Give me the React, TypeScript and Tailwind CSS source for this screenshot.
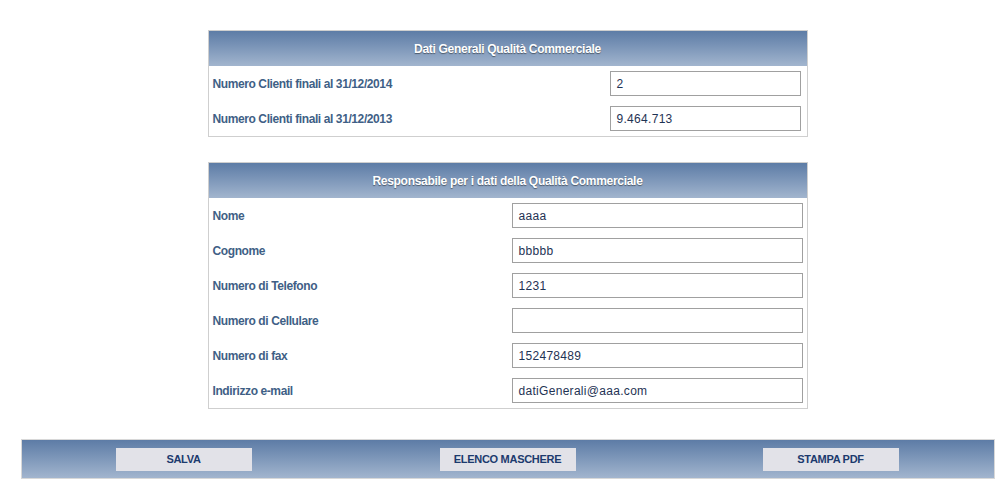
import React from "react";

const hdr = "bg-gradient-to-b from-[#5d7ca6] to-[#a2b5ce]";

function Row({ label, value, inputCls }: { label: string; value: string; inputCls: string }) {
  return (
    <div className="flex h-[35px] items-center justify-between pl-[4px]">
      <span className="text-[12px] font-bold text-[#3f5f86] tracking-[-0.4px]">{label}</span>
      <div className={`${inputCls} h-[25px] border border-[#a0a0a0] bg-white flex items-center pl-[6px] text-[12px] text-[#1f3354] tracking-[0.3px]`}>
        {value}
      </div>
    </div>
  );
}

export default function App() {
  return (
    <div className="w-[1003px] h-[480px] bg-white font-['Liberation_Sans',Arial,sans-serif] flex flex-col items-center pt-[30px]">
      <div className="w-[600px] ml-[12px] border border-[#cfcfcf]">
        <div className={`${hdr} h-[35px] flex items-center justify-center text-white font-bold text-[12px] tracking-[-0.3px] [text-shadow:0_1px_1px_rgba(0,0,0,0.45)]`}>
          Dati Generali Qualità Commerciale
        </div>
        <div className="pr-[6px]">
          <Row label="Numero Clienti finali al 31/12/2014" value="2" inputCls="w-[191px]" />
          <Row label="Numero Clienti finali al 31/12/2013" value="9.464.713" inputCls="w-[191px]" />
        </div>
      </div>

      <div className="w-[600px] ml-[12px] border border-[#cfcfcf] mt-[25px]">
        <div className={`${hdr} h-[35px] flex items-center justify-center text-white font-bold text-[12px] tracking-[-0.3px] [text-shadow:0_1px_1px_rgba(0,0,0,0.45)]`}>
          Responsabile per i dati della Qualità Commerciale
        </div>
        <div className="pr-[4px]">
          <Row label="Nome" value="aaaa" inputCls="w-[291px]" />
          <Row label="Cognome" value="bbbbb" inputCls="w-[291px]" />
          <Row label="Numero di Telefono" value="1231" inputCls="w-[291px]" />
          <Row label="Numero di Cellulare" value="" inputCls="w-[291px]" />
          <Row label="Numero di fax" value="152478489" inputCls="w-[291px]" />
          <Row label="Indirizzo e-mail" value="datiGenerali@aaa.com" inputCls="w-[291px]" />
        </div>
      </div>

      <div className={`mt-[30px] ml-[12px] w-[974px] h-[40px] border border-[#d8d8d8] ${hdr} flex items-center pl-[94px]`}>
        <button className="w-[136px] h-[23px] bg-[#e2e2e8] text-[#1c3a6e] font-bold text-[11px] tracking-[-0.3px]">SALVA</button>
        <button className="ml-[188px] w-[136px] h-[23px] bg-[#e2e2e8] text-[#1c3a6e] font-bold text-[11px] tracking-[-0.3px]">ELENCO MASCHERE</button>
        <button className="ml-[187px] w-[136px] h-[23px] bg-[#e2e2e8] text-[#1c3a6e] font-bold text-[11px] tracking-[-0.3px]">STAMPA PDF</button>
      </div>
    </div>
  );
}
